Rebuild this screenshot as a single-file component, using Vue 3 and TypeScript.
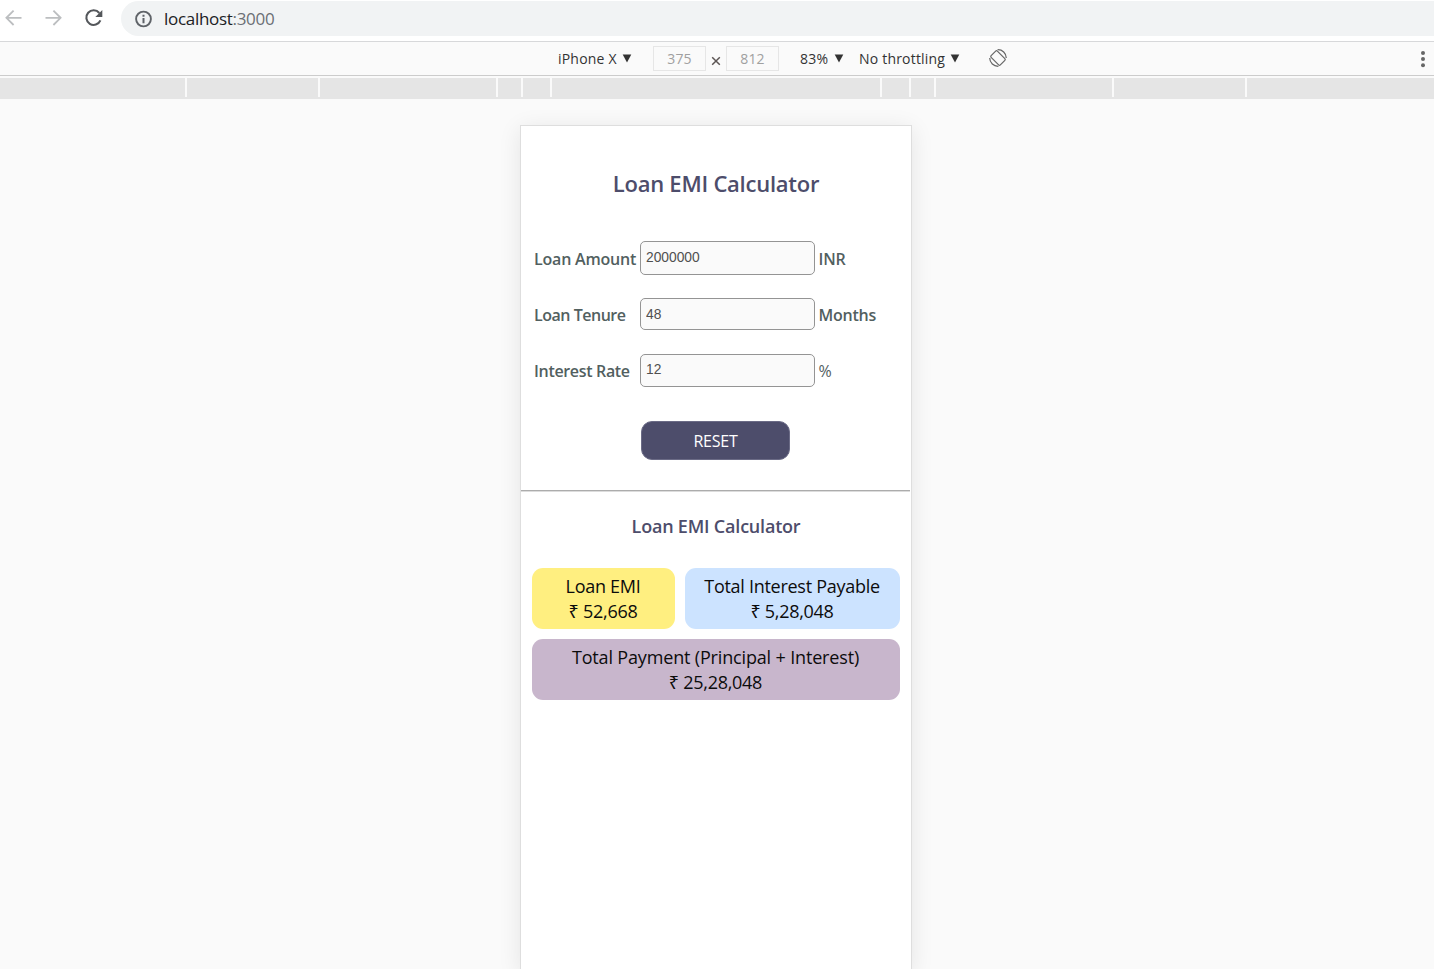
<script setup lang="ts">
import { ref } from 'vue'

interface Field {
  label: string
  value: string
  unit: string
  kind: string
}

const initial = (): Field[] => [
  { label: 'Loan Amount', value: '2000000', unit: 'INR', kind: 'amount' },
  { label: 'Loan Tenure', value: '48', unit: 'Months', kind: 'tenure' },
  { label: 'Interest Rate', value: '12', unit: '%', kind: 'rate' },
]

const fields = ref<Field[]>(initial())
const reset = () => {
  fields.value = initial()
}

const segments: number[] = [185, 131, 176, 23, 27, 328, 27, 23, 176, 131, 187]
</script>

<template>
  <div class="page">
    <header class="browser">
      <svg class="nav" width="120" height="36" viewBox="0 0 120 36" fill="none">
        <path d="M21.5 17.8H7M13.6 10.6L6.4 17.8L13.6 25" stroke="#bcbec0" stroke-width="1.8" />
        <path d="M45.5 17.8H60M53.4 10.6L60.6 17.8L53.4 25" stroke="#bcbec0" stroke-width="1.8" />
        <path d="M99.3 13A7.3 7.3 0 1 0 100.4 20.4" stroke="#54575b" stroke-width="2.1" />
        <path d="M102.3 10V17H95.3Z" fill="#54575b" />
      </svg>
      <div class="address">
        <svg width="18" height="18" viewBox="0 0 18 18" fill="none">
          <circle cx="9.5" cy="9" r="7.4" stroke="#5f6368" stroke-width="1.9" />
          <path d="M9.5 8V13.2M9.5 4.8V6.8" stroke="#5f6368" stroke-width="2" />
        </svg>
        <span class="url">localhost<i>:3000</i></span>
      </div>
    </header>

    <div class="devices">
      <span class="choice device">iPhone X</span>
      <svg class="arrow" width="10" height="9" viewBox="0 0 10 9"><path d="M.7.5H9.3L5 8.5Z" fill="#333" /></svg>
      <span class="size first">375</span>
      <svg class="times" width="10" height="10" viewBox="0 0 10 10"><path d="M1.2 1.2L8.8 8.8M8.8 1.2L1.2 8.8" stroke="#5c5554" stroke-width="1.5" /></svg>
      <span class="size">812</span>
      <span class="choice zoom">83%</span>
      <svg class="arrow" width="10" height="9" viewBox="0 0 10 9"><path d="M.7.5H9.3L5 8.5Z" fill="#333" /></svg>
      <span class="choice throttle">No throttling</span>
      <svg class="arrow" width="10" height="9" viewBox="0 0 10 9"><path d="M.7.5H9.3L5 8.5Z" fill="#333" /></svg>
      <svg class="rotate" width="20" height="20" viewBox="0 0 20 20" fill="none" stroke="#666" stroke-width="1.2">
        <rect x="5.6" y="3.5" width="8.8" height="13" rx="1.2" transform="rotate(-45 10 10)" />
        <path d="M9.6 1.7A8.4 8.4 0 0 1 18.3 10M10.4 18.3A8.4 8.4 0 0 1 1.7 10" />
      </svg>
      <svg class="more" width="6" height="18" viewBox="0 0 6 18" fill="#666">
        <circle cx="3" cy="2.9" r="2" /><circle cx="3" cy="9.1" r="2" /><circle cx="3" cy="15.3" r="2" />
      </svg>
    </div>

    <div class="ruler">
      <span v-for="(w, i) in segments" :key="i" class="segment" :style="{ width: w + 'px' }"></span>
    </div>

    <main class="phone">
      <h1>Loan EMI Calculator</h1>
      <form class="fields" @submit.prevent>
        <label v-for="f in fields" :key="f.kind" class="field" :class="f.kind">
          <span class="label">{{ f.label }}</span>
          <input v-model="f.value" type="text" />
          <span class="unit">{{ f.unit }}</span>
        </label>
      </form>
      <button type="button" @click="reset">RESET</button>
      <hr />
      <h2>Loan EMI Calculator</h2>
      <section class="results">
        <div class="card emi"><span>Loan EMI</span><span>₹ 52,668</span></div>
        <div class="card interest"><span>Total Interest Payable</span><span>₹ 5,28,048</span></div>
        <div class="card total"><span class="wide">Total Payment (Principal + Interest)</span><span>₹ 25,28,048</span></div>
      </section>
    </main>
  </div>
</template>

<style>
html,
body {
  overflow: hidden;
}
</style>

<style scoped>
* {
  box-sizing: border-box;
}
.page {
  width: 1434px;
  height: 969px;
  overflow: hidden;
  background: #fafafa;
  font-family: 'Open Sans', 'Noto Sans', sans-serif;
  display: flex;
  flex-direction: column;
}
.browser {
  flex: none;
  height: 42px;
  background: #fff;
  border-bottom: 1px solid #d7d8da;
  display: flex;
}
.nav {
  flex: none;
}
.address {
  flex: 1;
  margin: 1px 0 0 1px;
  height: 35px;
  background: #f1f3f4;
  border-radius: 18px 0 0 18px;
  display: flex;
  align-items: center;
  padding-left: 13px;
}
.url {
  margin-left: 12px;
  font-size: 17px;
  line-height: 24px;
  letter-spacing: -0.3px;
  color: #202124;
}
.url i {
  font-style: normal;
  color: #6b6f74;
}
.devices {
  flex: none;
  height: 34px;
  border-bottom: 1px solid #ccc;
  display: flex;
  align-items: center;
  padding-left: 558px;
  font-size: 14px;
  color: #333;
  white-space: nowrap;
}
.choice {
  flex: none;
  line-height: 20px;
}
.arrow {
  margin-bottom: 1px;
}
.device {
  width: 64px;
  letter-spacing: 0.2px;
}
.size {
  width: 53px;
  height: 25px;
  margin-bottom: 1px;
  border: 1px solid #e6e6e6;
  text-align: center;
  line-height: 23px;
  font-size: 14px;
  letter-spacing: 0.15px;
  color: #a0a0a0;
}
.first {
  margin-left: 21px;
}
.times {
  margin: 5px 5px 0;
}
.zoom {
  width: 34px;
  margin-left: 21px;
  letter-spacing: 0.3px;
}
.throttle {
  width: 91px;
  margin-left: 15px;
  letter-spacing: 0.2px;
}
.rotate {
  margin: 0 0 1px 27.5px;
}
.more {
  margin: 0 8px 0 auto;
}
.ruler {
  flex: none;
  height: 21px;
  margin-top: 2px;
  border-bottom: 2px solid #e5e5e5;
  display: flex;
  gap: 2px;
}
.segment {
  flex: none;
  background: #e5e5e5;
}
.phone {
  flex: none;
  width: 392px;
  height: 846px;
  margin: 26px 0 0 520px;
  background: #fff;
  border: 1px solid #dedede;
  box-shadow: 0 4px 22px rgba(0, 0, 0, 0.09);
  display: flex;
  flex-direction: column;
}
h1 {
  margin: 42px 0 0;
  height: 30px;
  line-height: 30px;
  text-align: center;
  font-size: 22px;
  font-weight: 600;
  letter-spacing: -0.24px;
  color: #4d4d6b;
}
.fields {
  margin-top: 43px;
  display: flex;
  flex-direction: column;
  gap: 23px;
}
.field {
  height: 33.3px;
  display: flex;
  align-items: center;
  padding-left: 13px;
  font-size: 16px;
  font-weight: 600;
  color: #52605f;
  white-space: nowrap;
}
.label {
  width: 106px;
  padding-top: 2px;
  letter-spacing: -0.2px;
}
.tenure .label {
  letter-spacing: -0.48px;
}
.rate .label {
  letter-spacing: -0.33px;
}
.unit {
  margin-left: 3.6px;
  padding-top: 2px;
  letter-spacing: -0.25px;
}
.rate .unit {
  font-weight: 400;
}
input {
  width: 175px;
  height: 33px;
  margin: 0;
  padding: 0 5px 1px;
  border: 1px solid #949494;
  border-radius: 5px;
  background: #fafafa;
  font: 13.8px 'Liberation Sans', Arial, sans-serif;
  color: #505050;
  outline: none;
}
.amount input {
  height: 34px;
  margin-top: 1px;
  padding-bottom: 2px;
}
.tenure input {
  height: 32px;
  margin-top: 1px;
  padding-bottom: 0;
}
button {
  width: 149px;
  height: 39px;
  margin: 34px 0 0 120px;
  padding: 1px 0 0;
  border: 1px solid #6b6b86;
  border-radius: 11px;
  background: #4d4d6b;
  color: #fff;
  font: 16px 'Open Sans', sans-serif;
  letter-spacing: -0.2px;
}
hr {
  width: 389px;
  height: 2px;
  margin: 30px 0 0;
  border: 0;
  border-top: 1px solid #acacac;
  border-bottom: 1px solid #dcdcdc;
}
h2 {
  margin: 22px 0 0;
  height: 24px;
  line-height: 24px;
  text-align: center;
  font-size: 18px;
  font-weight: 600;
  letter-spacing: -0.2px;
  color: #4d4d6b;
}
.results {
  margin: 30px 11px 0 11px;
  display: grid;
  grid-template-columns: 143px 215px;
  gap: 10px;
}
.card {
  height: 61px;
  border-radius: 11px;
  display: flex;
  flex-direction: column;
  align-items: center;
  padding: 6px 1px 0 0;
  font-size: 18px;
  line-height: 25px;
  letter-spacing: -0.28px;
  color: #0c0c0c;
  white-space: nowrap;
}
.wide {
  letter-spacing: -0.16px;
}
.emi {
  background: #ffef80;
}
.interest {
  background: #cce3ff;
}
.total {
  grid-column: span 2;
  background: #c8b6cc;
}
</style>
